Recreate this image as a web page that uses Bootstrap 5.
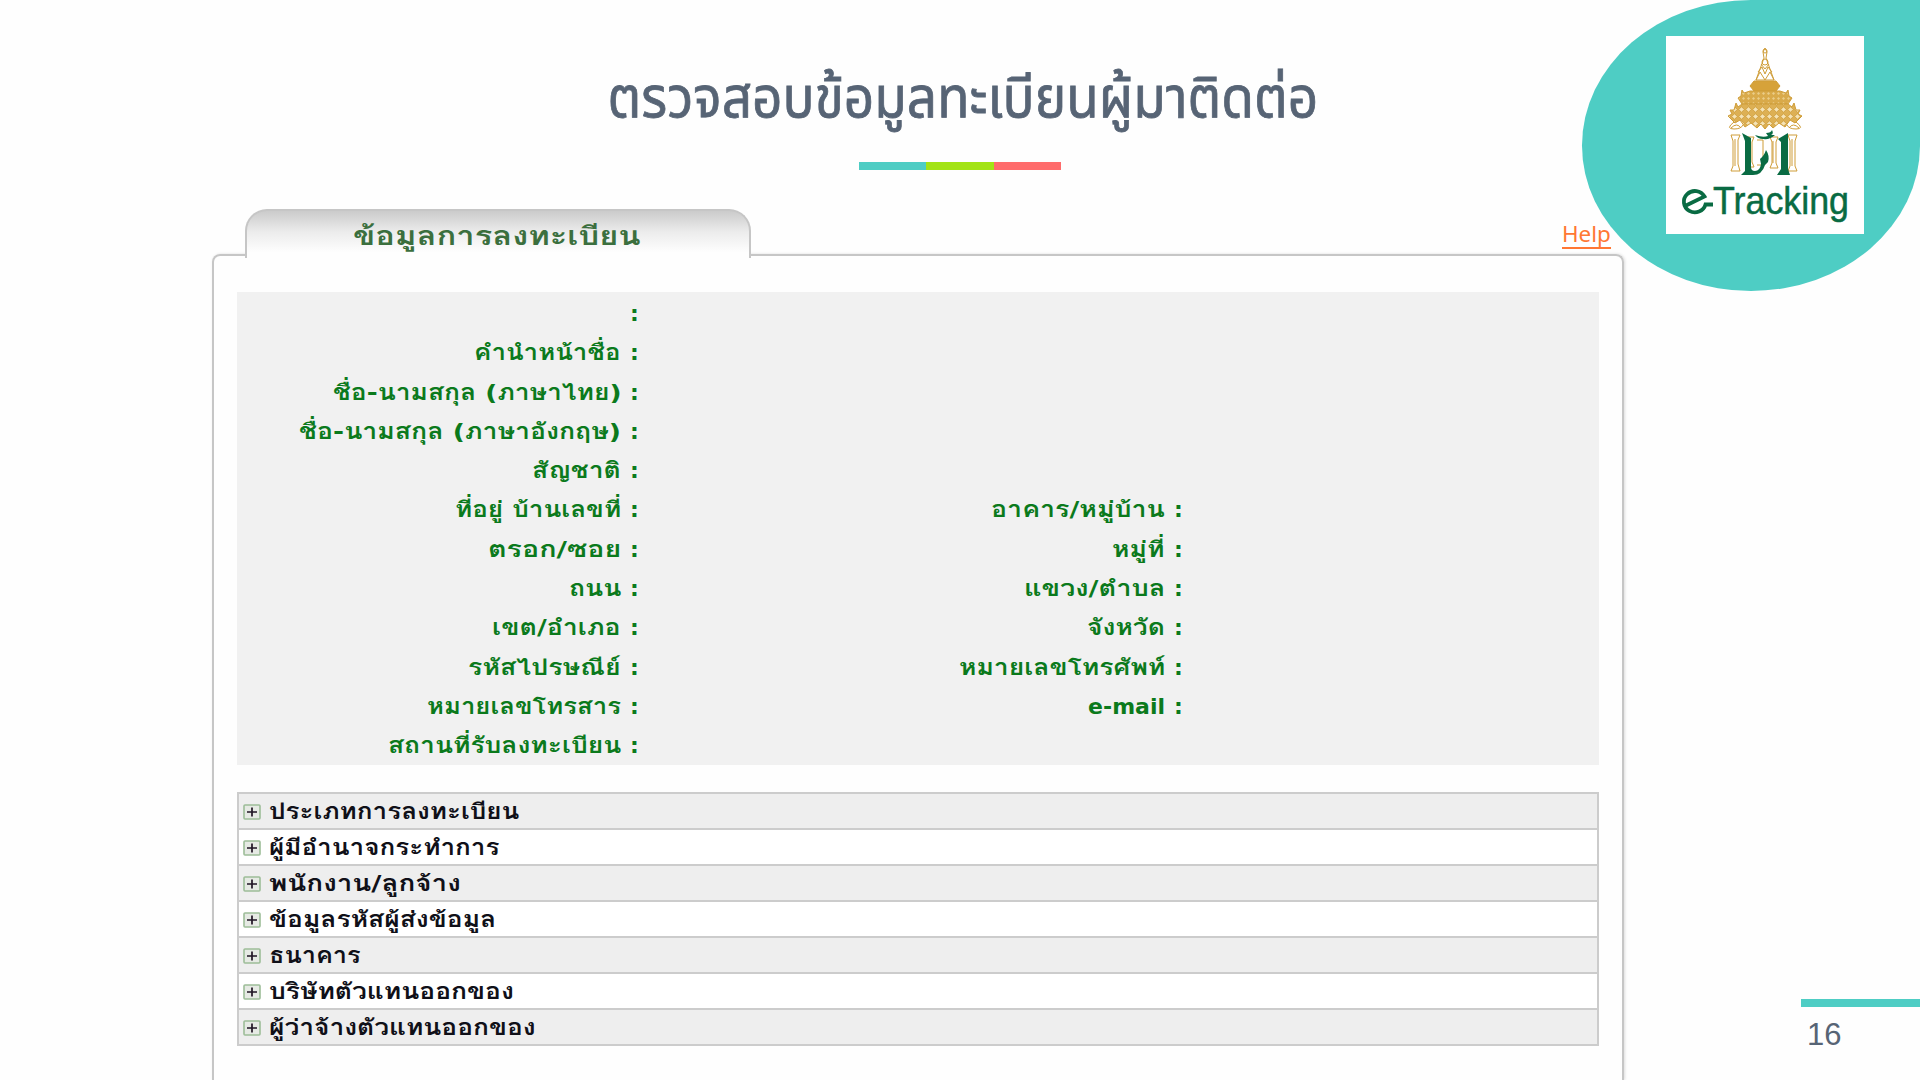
<!DOCTYPE html>
<html lang="th">
<head>
<meta charset="utf-8">
<meta name="viewport" content="width=device-width, initial-scale=1">
<title>e-Tracking</title>
<link href="https://cdn.jsdelivr.net/npm/bootstrap@5.3.0/dist/css/bootstrap.min.css" rel="stylesheet">
<style>
body{width:1920px;height:1080px;background:#fefefe;font-family:"Noto Sans","Noto Sans Thai","Open Sans",sans-serif}
.slide-title{padding:59px 0 0 5px;height:162px;font-size:58px;line-height:80px;color:#576475;font-family:"Noto Sans Thai",Roboto,sans-serif;font-weight:400;-webkit-text-stroke:.8px #576475}
.fit{display:inline-block;white-space:nowrap;transform-origin:0 50%}
.fit-end{transform-origin:100% 50%}
.fit-mid{transform-origin:50% 50%}
.accent{width:202px;height:8px;margin-left:859px}
.accent div{flex:1 1 0}
.teal{background:#4ecdc4}.lime{background:#a3e315}.coral{background:#ff6b6b}
.drop{position:absolute;right:0;top:0;width:338px;height:291px;border-radius:50% 0 50% 50%;padding:36px 0 0 84px}
.drop svg{display:block;width:198px;height:198px}
.window-wrap{width:1412px;margin-left:212px;margin-top:39px}
.tab-row{height:45px;padding-left:33px;padding-right:13px}
.tab-head{position:relative;z-index:1;width:506px;height:49px;border:2px solid #c6c6c6;border-bottom:0;border-radius:22px 22px 0 0;background:linear-gradient(#cbcbcb,#ececec 45%,#fefefe 88%);padding:8px 0 0 106px;font-size:26px;line-height:34px;font-weight:700;color:#3b6f3e;font-family:"DejaVu Sans","Loma","Noto Sans Thai",sans-serif}
.help-link{font-size:21.5px;line-height:26px;color:#ff7733;margin-top:12px;text-decoration:none}
.help-link .fit{border-bottom:2px solid #ff7733}
.window{height:826px;border:2px solid #c6c6c6;border-bottom:0;border-radius:8px 8px 0 0;padding:36px 23px 0 23px;box-shadow:1px 0 3px #ddd;font-family:"DejaVu Sans","Loma","Noto Sans Thai",sans-serif}
.info{background:#f1f1f1;height:473px;color:#0b7a1c;font-size:22px;font-weight:700;padding-top:2px}
.info-row{height:39.3px;line-height:39.3px}
.lab{width:401px;gap:10px}
.lab+.lab{width:544px}
.lab .fit{position:relative;left:1px}
.colon{width:8px}
.groups{margin-top:27px;border:2px solid #ccc;border-bottom:0}
.group-line{height:36px;border-bottom:2px solid #ccc;padding:2px 0 0 4px;gap:8px;font-size:22px;line-height:34px;font-weight:700;color:#101018;background:#fff}
.group-line:nth-child(odd){background:#eee}
.page-no{position:absolute;left:1801px;right:0;top:999px;border-top:8px solid #4ecdc4;padding:5px 0 0 6px;font:31px/46px "Liberation Sans",sans-serif;color:#576475}
</style>
<script src="https://cdn.jsdelivr.net/npm/bootstrap@5.3.0/dist/js/bootstrap.bundle.min.js"></script>
</head>
<body class="position-relative overflow-hidden">
<h1 class="slide-title text-center m-0"><span class="fit fit-mid" data-w="711">ตรวจสอบข้อมูลทะเบียนผู้มาติดต่อ</span></h1>
<div class="accent d-flex"><div class="teal"></div><div class="lime"></div><div class="coral"></div></div>

<main class="window-wrap">
  <div class="tab-row d-flex justify-content-between align-items-start">
    <div class="tab-head"><span class="fit" data-w="288">ข้อมูลการลงทะเบียน</span></div>
    <a href="#" class="help-link"><span class="fit fit-end" data-w="49">Help</span></a>
  </div>
  <section class="window">
    <div class="info" id="info"></div>
    <div class="groups" id="groups"></div>
  </section>
</main>

<div class="drop teal">
<svg viewBox="0 0 198 198">
  <defs><pattern id="lattice" width="5" height="5" patternUnits="userSpaceOnUse"><rect width="5" height="5" fill="#d9aa4a"/><path d="M2.5 1L4 2.5 2.5 4 1 2.5z" fill="#ebcd88"/></pattern>
  <pattern id="lattice2" x="2" width="7" height="7" patternUnits="userSpaceOnUse"><rect width="7" height="7" fill="#ddb054"/><path d="M3.5 .7L6.3 3.5 3.5 6.3 .7 3.5z" fill="#f5e3b5" stroke="#c9952f" stroke-width=".7"/></pattern></defs>
  <rect width="198" height="198" fill="#fff"/>
  <g stroke="#cf9d38" stroke-width="1" fill="none">
    <path d="M99 12l-2 4 1 6-8 22h18l-8-22 1-6zM95 28l4 5 4-5M92 36l4-5 3 7 3-7 4 5M90 44l4-8 5 8 5-8 4 8"/>
    <circle cx="99" cy="26" r="3"/><circle cx="99" cy="15" r="2"/>
    <path d="M88 45H110L114 50 110 55H88L84 50z" fill="#d6a23a"/>
    <path d="M84 55H114L120 57 122 54 123 60 126 62 122 68H76L72 62 75 60 76 54 78 57z" fill="url(#lattice)"/>
    <path d="M76 68H122L126 71 128 67 130 74 134 74 132 78 136 80 129 87 124 84 119 91 113 87 107 92 103 88 99 93 95 88 91 92 85 87 79 91 74 84 69 87 62 80 66 78 64 74 68 74 70 67 72 71z" fill="url(#lattice2)"/>
    <path d="M68 86q-9 7 0 7 7 0 9-4M130 86q9 7 0 7-7 0-9-4M65 92q6-6 10 0M133 92q-6-6-10 0"/>
    <path d="M65 99h9l-2 5v24l2 7h-9l2-5v-25zM82 101h6l-2 5v20l2 5h-6M91 104h6v25h-6M104 101h8l-2 5v21l2 5h-8l2-5v-21zM122 99h9l-2 6v25l2 5h-9l2-5v-25z"/>
    <path d="M69 103v27M107 105v22M126 103v27"/>
  </g>
  <g fill="#096b43">
    <path d="M76 97l9 5v29q0 4 4 4 5 0 6-7l-1-5q4-3 6-9 4 6 2 12l-3 3q-3 10-12 10H75l4-4V105z"/>
    <path d="M122 97l-10 6 3 3v27l-4 6h13l-2-6v-28zM89 99q8 3 13 1l-2-3q5 0 6-3 2 4-1 5h4q-5 5-12 4-5 0-8-4z"/>
  </g>
  <path d="M20 169.5L38.5 160.5A11 10.7 0 1 0 39.5 168.5H47" fill="none" stroke="#096b43" stroke-width="3.8"/>
  <text x="47" y="178" textLength="136" lengthAdjust="spacingAndGlyphs" font-family="Liberation Sans,sans-serif" font-size="38.5" fill="#096b43" stroke="#096b43" stroke-width=".5">Tracking</text>
</svg>
</div>
<div class="page-no">16</div>

<script>
// [left label, width, right label, width]
const fields=[['',0],['คำนำหน้าชื่อ',147],['ชื่อ-นามสกุล (ภาษาไทย)',288],['ชื่อ-นามสกุล (ภาษาอังกฤษ)',322],['สัญชาติ',89],
['ที่อยู่ บ้านเลขที่',166,'อาคาร/หมู่บ้าน',174],['ตรอก/ซอย',133,'หมู่ที่',53],['ถนน',52,'แขวง/ตำบล',141],['เขต/อำเภอ',129,'จังหวัด',78],
['รหัสไปรษณีย์',153,'หมายเลขโทรศัพท์',206],['หมายเลขโทรสาร',194,'e-mail',77],['สถานที่รับลงทะเบียน',233]];
const groups=[['ประเภทการลงทะเบียน',251],['ผู้มีอำนาจกระทำการ',231],['พนักงาน/ลูกจ้าง',192],['ข้อมูลรหัสผู้ส่งข้อมูล',227],['ธนาคาร',92],['บริษัทตัวแทนออกของ',245],['ผู้ว่าจ้างตัวแทนออกของ',267]];
const label=(t,w)=>`<div class="lab d-flex justify-content-end">${t?`<span class="fit fit-end" data-w="${w}">${t}</span>`:''}<span class="colon">:</span></div>`;
document.getElementById('info').innerHTML=fields.map(f=>`<div class="info-row d-flex">${label(f[0],f[1])}${f[2]?label(f[2],f[3]):''}</div>`).join('');
const plus='<svg width="18" height="16" viewBox="0 0 18 16"><rect x="1" y="1" width="16" height="14" rx="1" fill="#e6eae4" stroke="#9dbd98" stroke-width="1.6"/><path d="M4 8h10M9 3.5v9" stroke="#201525" stroke-width="1.7"/></svg>';
document.getElementById('groups').innerHTML=groups.map(g=>`<div class="group-line d-flex align-items-center">${plus}<span class="fit" data-w="${g[1]}">${g[0]}</span></div>`).join('');
document.querySelectorAll('.fit').forEach(e=>{e.style.transform=`scaleX(${e.dataset.w/e.offsetWidth})`});
</script>
</body>
</html>
